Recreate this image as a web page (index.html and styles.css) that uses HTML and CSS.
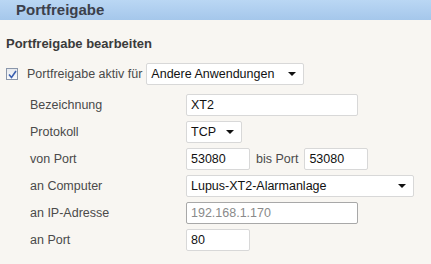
FILE: index.html
```html
<!DOCTYPE html>
<html lang="de">
<head>
<meta charset="utf-8">
<link rel="stylesheet" href="styles.css">
</head>
<body>
<div class="header">Portfreigabe</div>
<div class="content">
  <h2 class="section-title">Portfreigabe bearbeiten</h2>
  <div class="active-row">
    <span class="checkbox"><svg width="9" height="9" viewBox="0 0 9 9"><path d="M1 4.5 L3.5 7.5 L8 1" fill="none" stroke="#3a5fb0" stroke-width="1.6"/></svg></span>
    <span class="active-label">Portfreigabe aktiv für</span>
    <span class="select select-app">Andere Anwendungen<span class="arrow"></span></span>
  </div>
  <div class="form">
    <div class="label">Bezeichnung</div>
    <div class="ctrl"><span class="input w-long">XT2</span></div>
    <div class="label">Protokoll</div>
    <div class="ctrl"><span class="select w-tcp">TCP<span class="arrow"></span></span></div>
    <div class="label">von Port</div>
    <div class="ctrl"><span class="input w-port">53080</span><span class="bis">bis Port</span><span class="input w-port">53080</span></div>
    <div class="label">an Computer</div>
    <div class="ctrl"><span class="select w-comp">Lupus-XT2-Alarmanlage<span class="arrow"></span></span></div>
    <div class="label">an IP-Adresse</div>
    <div class="ctrl"><span class="input w-long disabled">192.168.1.170</span></div>
    <div class="label">an Port</div>
    <div class="ctrl"><span class="input w-port">80</span></div>
  </div>
</div>
</body>
</html>
```
FILE: styles.css
```css
* { box-sizing: border-box; }
body {
  margin: 0;
  background: #f8f6f2;
  font-family: "Liberation Sans", Arial, sans-serif;
  font-size: 12.5px;
  color: #4a4a4a;
}
.header {
  height: 20px;
  background: linear-gradient(#bad7f4, #a5c7eb);
  padding-left: 16px;
  font-weight: bold;
  font-size: 15px;
  line-height: 20px;
  color: #3b404b;
}
.content { padding: 0 6px; }
.section-title {
  margin: 16px 0 0;
  font-size: 13px;
  font-weight: bold;
  color: #3b3b3b;
  line-height: 15px;
}
.active-row {
  display: flex;
  align-items: center;
  margin-top: 12px;
  height: 22px;
}
.checkbox {
  width: 12px;
  height: 12px;
  border: 1px solid #8a96aa;
  background: linear-gradient(#e6e9ee, #fafbfc);
  display: flex;
  align-items: center;
  justify-content: center;
}
.active-label { margin-left: 9px; margin-right: 4px; }
.select, .input {
  display: inline-flex;
  align-items: center;
  height: 22px;
  background: #fff;
  border: 1px solid #d8d8d8;
  border-radius: 2px;
  padding-left: 4px;
  color: #111;
  font-size: 12.5px;
}
.select { justify-content: space-between; padding-right: 7px; }
.arrow {
  width: 0; height: 0;
  border-left: 4px solid transparent;
  border-right: 4px solid transparent;
  border-top: 4px solid #111;
}
.select-app { width: 158px; }
.form {
  display: grid;
  grid-template-columns: 156px auto;
  row-gap: 5px;
  padding-left: 24px;
  margin-top: 9px;
  align-items: center;
}
.ctrl { display: flex; align-items: center; }
.w-long { width: 172px; }
.w-tcp { width: 56px; }
.w-port { width: 64px; }
.w-comp { width: 228px; }
.bis { margin: 0 6px 0 6px; }
.disabled { color: #8a8a8a; border-color: #a8a8a8; }
```
